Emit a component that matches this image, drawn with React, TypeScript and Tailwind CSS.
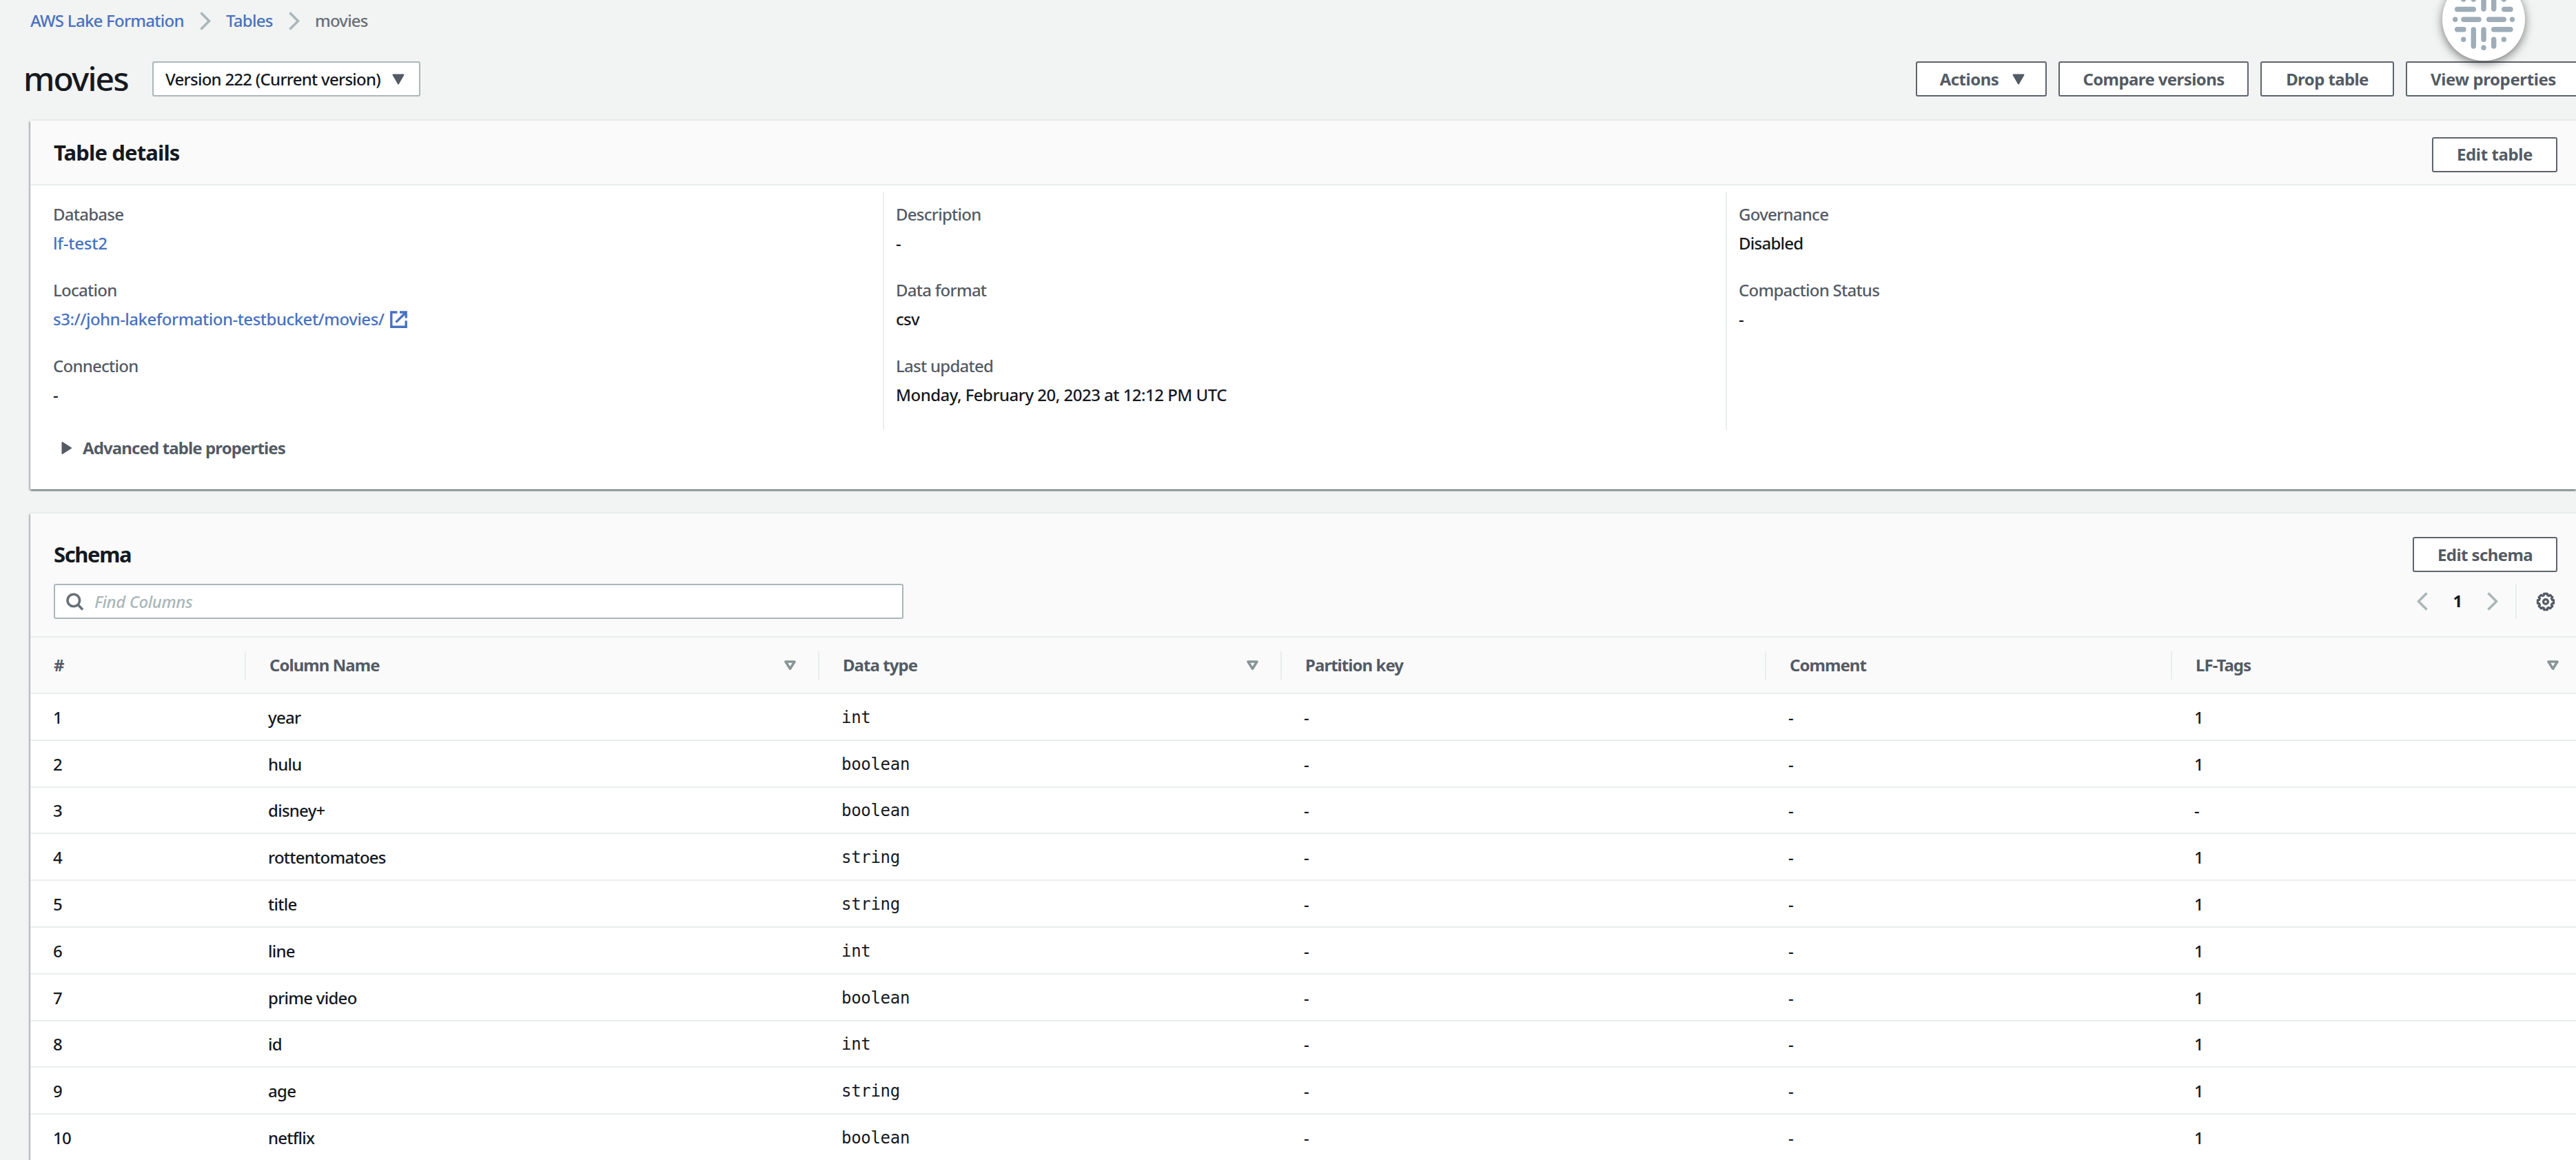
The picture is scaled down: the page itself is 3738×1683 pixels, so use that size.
import type { ReactNode } from "react";
import clsx from "clsx";

type Column = {
  id: number;
  name: string;
  type: string;
  tags: string;
};

type Field = {
  label: string;
  value: ReactNode;
};

const COLUMNS: Column[] = [
  { id: 1, name: "year", type: "int", tags: "1" },
  { id: 2, name: "hulu", type: "boolean", tags: "1" },
  { id: 3, name: "disney+", type: "boolean", tags: "-" },
  { id: 4, name: "rottentomatoes", type: "string", tags: "1" },
  { id: 5, name: "title", type: "string", tags: "1" },
  { id: 6, name: "line", type: "int", tags: "1" },
  { id: 7, name: "prime video", type: "boolean", tags: "1" },
  { id: 8, name: "id", type: "int", tags: "1" },
  { id: 9, name: "age", type: "string", tags: "1" },
  { id: 10, name: "netflix", type: "boolean", tags: "1" },
];

const HEADERS = [
  { label: "#", sortable: false },
  { label: "Column Name", sortable: true },
  { label: "Data type", sortable: true },
  { label: "Partition key", sortable: false },
  { label: "Comment", sortable: false },
  { label: "LF-Tags", sortable: true },
];

const DETAILS: Field[][] = [
  [
    { label: "Database", value: <a className="tracking-[-0.2px] text-[#4872bf]">lf-test2</a> },
    {
      label: "Location",
      value: (
        <a className="flex items-center gap-[8px] tracking-[-0.5px] text-[#4872bf]">
          s3://john-lakeformation-testbucket/movies/
          <ExternalIcon />
        </a>
      ),
    },
    { label: "Connection", value: "-" },
  ],
  [
    { label: "Description", value: "-" },
    { label: "Data format", value: "csv" },
    {
      label: "Last updated",
      value: <span className="tracking-[-0.52px]">Monday, February 20, 2023 at 12:12 PM UTC</span>,
    },
  ],
  [
    { label: "Governance", value: "Disabled" },
    { label: "Compaction Status", value: "-" },
  ],
];

const GRID = "grid grid-cols-[313px_832px_671px_703px_589px_1fr]";
const CARD =
  "ml-[44px] bg-white shadow-[0_2px_2px_rgba(0,28,36,0.45),2px_2px_2px_rgba(0,28,36,0.15),-2px_1px_2px_rgba(0,28,36,0.22),0_-2px_0_#eaeded]";

// Gear outline with eight rounded teeth, centred on 0,0
const GEAR_POINTS = Array.from({ length: 8 }, (_, i) => {
  const base = (i * Math.PI) / 4;
  return [
    [-0.21, 11.8],
    [0.21, 11.8],
    [0.27, 9.7],
    [0.515, 9.7],
  ]
    .map(([a, r]) => `${(r * Math.sin(base + a)).toFixed(2)},${(-r * Math.cos(base + a)).toFixed(2)}`)
    .join(" ");
}).join(" ");

function ExternalIcon() {
  return (
    <svg className="h-[25px] w-[25px]" viewBox="0 0 25 25" fill="none" stroke="currentColor" strokeWidth="3.4">
      <path d="M10.5 2H1.8v21.2h21.4v-9" />
      <path d="M14 2h9.2v8.6M23 2.2L8.5 16.6" />
    </svg>
  );
}

function Chevron({ left = false }: { left?: boolean }) {
  return (
    <svg
      className={clsx("h-[27px] w-[16px] text-[#aab7b8]", left && "rotate-180")}
      viewBox="0 0 16 27"
      fill="none"
      stroke="currentColor"
      strokeWidth="3.6"
    >
      <path d="M1.5 1.5L13.5 13.5L1.5 25.5" />
    </svg>
  );
}

function Caret() {
  return (
    <svg className="h-[16px] w-[18px] text-[#545b64]" viewBox="0 0 18 16">
      <path
        d="M1.5 1.5h15L9 14.5z"
        fill="currentColor"
        stroke="currentColor"
        strokeWidth="2"
        strokeLinejoin="round"
      />
    </svg>
  );
}

function SortIcon({ className }: { className: string }) {
  return (
    <svg
      className={clsx("mt-px h-[15px] w-[17px] text-[#879596]", className)}
      viewBox="0 0 17 15"
      fill="none"
      stroke="currentColor"
      strokeWidth="3.6"
      strokeLinejoin="round"
    >
      <path d="M2 2h13L8.5 12.2z" />
    </svg>
  );
}

function SearchIcon() {
  return (
    <svg
      className="h-[26px] w-[26px] text-[#687078]"
      viewBox="0 0 26 26"
      fill="none"
      stroke="currentColor"
      strokeWidth="3.6"
    >
      <circle cx="10.8" cy="11" r="8.8" />
      <path d="M17 17.2L24 24.4" />
    </svg>
  );
}

function GearIcon() {
  return (
    <svg
      className="h-[28px] w-[28px] text-[#545b64]"
      viewBox="-14 -14 28 28"
      fill="none"
      stroke="currentColor"
      strokeWidth="3.2"
      strokeLinejoin="round"
    >
      <polygon points={GEAR_POINTS} />
      <circle r="3.4" />
    </svg>
  );
}

// Floating round widget that hangs over the top edge of the page
function FloatingBadge() {
  return (
    <div className="absolute -top-[32px] left-[3544px] h-[120px] w-[120px] rounded-full bg-white shadow-[0_4px_14px_rgba(0,0,0,0.5)]">
      <svg
        className="h-full w-full text-[#9eadb8]"
        viewBox="0 0 120 120"
        stroke="currentColor"
        strokeWidth="7.4"
        strokeLinecap="round"
      >
        <path d="M21.7 45.5H45.3M89.7 45.5H99M31 60.3H53M67.7 60.3H89.3M21.7 74.7H31M74.7 74.7H99" />
        <path d="M45.3 75V99M60 75V89.3M74.7 89.3V99M60 31V45M74.7 21V45M45.3 21V31" />
        <path d="M18.7 60.3h.01M101.5 60.3h.01M30.7 89.3h.01M89.3 89.3h.01M60 101.3h.01M30.7 31h.01M89.3 31h.01M60 19h.01" />
      </svg>
    </div>
  );
}

function Button({ children, className }: { children: ReactNode; className: string }) {
  return (
    <button
      type="button"
      className={clsx(
        "flex h-[51px] shrink-0 items-center justify-center whitespace-nowrap rounded-[3px] border-2 border-[#5d646d] bg-white font-bold text-[#545b64]",
        className
      )}
    >
      {children}
    </button>
  );
}

function DetailField({ label, value }: Field) {
  return (
    <div className="mb-[26px] leading-[42px]">
      <div className="text-[#545b64]">{label}</div>
      <div>{value}</div>
    </div>
  );
}

export default function App() {
  return (
    <div className="relative h-[1683px] w-full overflow-hidden bg-[#f2f3f3] font-['Noto_Sans','Open_Sans',sans-serif] text-[24px] font-medium leading-[42px] tracking-[-0.74px] text-[#16191f]">
      <nav className="flex h-[60px] items-center pl-[44px]" aria-label="Breadcrumbs">
        <a className="w-[246px] text-[#4872bf]">AWS Lake Formation</a>
        <Chevron />
        <a className="ml-[22px] w-[91px] text-[#4872bf]">Tables</a>
        <Chevron />
        <span className="ml-[22px] tracking-[-0.8px] text-[#687078]">movies</span>
      </nav>

      <header className="flex h-[109px] items-center">
        <h1 className="w-[221px] pb-[2px] pl-[34px] text-[48px] tracking-[-1.9px]">movies</h1>
        <div className="flex h-[51px] w-[389px] items-center justify-between rounded-[3px] border-2 border-[#aab7b8] bg-white pl-[17px] pr-[21px]">
          <span>Version 222 (Current version)</span>
          <Caret />
        </div>
        <div className="-mr-[7px] ml-auto flex gap-[17px]">
          <Button className="w-[190px] gap-[20px] pl-[3px] tracking-[-0.5px]">
            Actions
            <Caret />
          </Button>
          <Button className="w-[276px] tracking-[-0.6px]">Compare versions</Button>
          <Button className="w-[194px] tracking-[-0.6px]">Drop table</Button>
          <Button className="w-[254px] tracking-[-0.4px]">View properties</Button>
        </div>
      </header>

      <section className={clsx("mt-[6px] h-[535px]", CARD)}>
        <div className="flex h-[94px] items-center justify-between border-b-2 border-[#eaeded] bg-[#fafafa] pl-[34px] pr-[27px]">
          <h2 className="-mt-px text-[31px] font-bold tracking-[-0.85px]">Table details</h2>
          <Button className="mt-[6px] w-[182px] tracking-[-0.4px]">Edit table</Button>
        </div>
        <div className="grid grid-cols-[1237px_1223px_1fr] pt-[9px]">
          {DETAILS.map((fields, i) => (
            <div
              key={i}
              className={clsx("h-[346px] pt-[12px]", i === 0 ? "pl-[33px]" : "border-l-2 border-[#eaeded] pl-[17px]")}
            >
              {fields.map((field) => (
                <DetailField key={field.label} {...field} />
              ))}
            </div>
          ))}
        </div>
        <div className="flex h-[51px] items-center pl-[45px] font-bold tracking-[-0.88px] text-[#545b64]">
          <svg className="mr-[15px] h-[20px] w-[16px]" viewBox="0 0 16 20">
            <path
              d="M1.5 2v16L14 10z"
              fill="currentColor"
              stroke="currentColor"
              strokeWidth="2"
              strokeLinejoin="round"
            />
          </svg>
          Advanced table properties
        </div>
      </section>

      <section className={clsx("mt-[35px] h-[960px]", CARD)}>
        <div className="border-b-2 border-[#eaeded] bg-[#fafafa] pb-[25px] pl-[34px] pr-[27px] pt-[34px]">
          <div className="flex h-[51px] items-center justify-between">
            <h2 className="pb-[2px] text-[31px] font-bold tracking-[-1.4px]">Schema</h2>
            <Button className="w-[210px] tracking-[-0.6px]">Edit schema</Button>
          </div>
          <div className="mt-[17px] flex h-[51px] items-center">
            <div className="flex h-[51px] w-[1233px] items-center gap-[15px] rounded-[3px] border-2 border-[#aab7b8] bg-white pl-[16px]">
              <SearchIcon />
              <span className="italic tracking-[-0.4px] text-[#aab7b8]">Find Columns</span>
            </div>
            <div className="ml-auto mr-[3px] flex h-[51px] items-center">
              <Chevron left />
              <span className="w-[86px] pb-px text-center font-bold">1</span>
              <Chevron />
              <span className="ml-[25px] mr-[28px] h-[51px] w-[2px] bg-[#eaeded]" />
              <GearIcon />
            </div>
          </div>
        </div>

        <div className={clsx("h-[82px] items-center border-b-2 border-[#eaeded] bg-[#fafafa]", GRID)}>
          {HEADERS.map(({ label, sortable }, i) => {
            const last = i === HEADERS.length - 1;
            return (
              <div
                key={label}
                className={clsx(
                  "flex h-[41px] items-center justify-between pb-px pl-[34px] font-bold tracking-[-0.95px] text-[#545b64]",
                  !last && "border-r-2 border-[#eaeded]"
                )}
              >
                {label}
                {sortable && <SortIcon className={last ? "mr-[25px]" : "mr-[32px]"} />}
              </div>
            );
          })}
        </div>

        {COLUMNS.map((column) => (
          <div
            key={column.id}
            className={clsx("h-[67.8px] items-center border-b-2 border-[#eaeded] pt-[2px]", GRID)}
          >
            <div className="pl-[33px]">{column.id}</div>
            <div className="pl-[32px]">{column.name}</div>
            <div className="pl-[32px] font-['DejaVu_Sans_Mono',monospace] text-[24px] font-normal tracking-[-0.3px]">
              {column.type}
            </div>
            <div className="pl-[32px]">-</div>
            <div className="pl-[32px]">-</div>
            <div className="pl-[32px]">{column.tags}</div>
          </div>
        ))}
      </section>

      <FloatingBadge />
    </div>
  );
}
